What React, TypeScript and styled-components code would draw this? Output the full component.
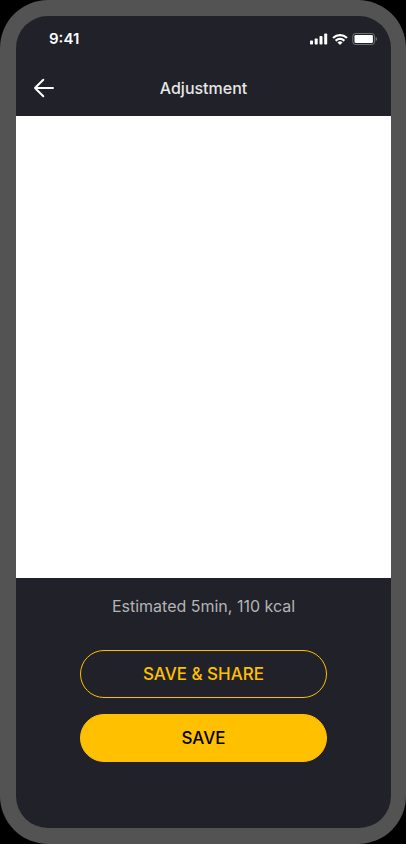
import React from "react";
import styled, { createGlobalStyle } from "styled-components";

const GlobalStyle = createGlobalStyle`
  *, *::before, *::after { box-sizing: border-box; }
  html, body, #root { height: 100%; }
  body { margin: 0; background: #000; font-family: Inter, "Liberation Sans", sans-serif; }
`;

const Device = styled.div`
  display: flex;
  min-height: 100%;
  padding: 16px 15px 16px 16px;
  border-radius: 48px;
  background: #535353;
`;

const Screen = styled.main`
  display: flex;
  flex: 1;
  flex-direction: column;
  overflow: hidden;
  border-radius: 32px;
  background: #212129;
`;

const StatusBar = styled.div`
  display: flex;
  align-items: center;
  justify-content: space-between;
  height: 44px;
  padding: 2px 14px 0 33px;
`;

const Clock = styled.time`
  color: #fff;
  font-size: 15px;
  font-weight: 600;
  line-height: 20px;
`;

const StatusIcons = styled.div`
  display: flex;
  align-items: center;
  gap: 4px;
`;

const Header = styled.header`
  display: grid;
  grid-template-columns: 56px 1fr 56px;
  align-items: center;
  height: 56px;
`;

const BackButton = styled.button`
  display: flex;
  align-items: center;
  width: 56px;
  height: 56px;
  padding: 0 0 0 16px;
  border: 0;
  background: none;
  color: #fff;
  cursor: pointer;
`;

const Title = styled.h1`
  margin: 0;
  color: #e6e6e6;
  font-size: 16px;
  font-weight: 500;
  line-height: 24px;
  text-align: center;
`;

const Preview = styled.section`
  flex: 1;
  background: #fff;
`;

const Footer = styled.footer`
  display: flex;
  flex-direction: column;
  align-items: center;
  padding: 16px 64px 66px;
`;

const Estimate = styled.p`
  margin: 0 0 32px;
  color: #b4b4b6;
  font-size: 16px;
  font-weight: 400;
  line-height: 24px;
  white-space: nowrap;
`;

const Actions = styled.div`
  display: flex;
  flex-direction: column;
  gap: 16px;
  width: 100%;
`;

const ActionButton = styled.button<{ $filled?: boolean }>`
  height: 48px;
  padding: 0;
  border: 1px solid #ffc000;
  border-radius: 24px;
  background: ${(p) => (p.$filled ? "#ffc000" : "transparent")};
  color: ${(p) => (p.$filled ? "#000" : "#ffc000")};
  font-family: inherit;
  font-size: 17px;
  font-weight: 500;
  line-height: 24px;
  cursor: pointer;
`;

const SignalIcon = () => (
  <svg width="18" height="12" viewBox="0 0 18 12" fill="#fff" aria-hidden="true">
    <rect x="0" y="7.5" width="3" height="4" rx="0.8" />
    <rect x="4.7" y="5.5" width="3" height="6" rx="0.8" />
    <rect x="9.5" y="3" width="3" height="8.5" rx="0.8" />
    <rect x="14.2" y="0.5" width="3" height="11" rx="0.8" />
  </svg>
);

const WifiIcon = () => (
  <svg width="16" height="11" viewBox="0 0 16 11" fill="#fff" aria-hidden="true">
    <path d="M8 2.3c2.2 0 4.3.8 5.9 2.3.1.1.3.1.4 0l1.2-1.2c.1-.1.1-.3 0-.4a10.9 10.9 0 0 0-15 0c-.1.1-.1.3 0 .4l1.2 1.2c.1.1.3.1.4 0A8.6 8.6 0 0 1 8 2.3z" />
    <path d="M8 6.1c1.2 0 2.4.5 3.3 1.3.1.1.3.1.4 0l1.2-1.2c.1-.1.1-.3 0-.4a7.1 7.1 0 0 0-9.8 0c-.1.1-.1.3 0 .4l1.2 1.2c.1.1.3.1.4 0C5.6 6.6 6.8 6.1 8 6.1z" />
    <path d="M10.3 8.7c.1-.1.1-.3 0-.4a3.6 3.6 0 0 0-4.6 0c-.1.1-.1.3 0 .4l2.1 2.1c.1.1.3.1.4 0z" />
  </svg>
);

const BatteryIcon = () => (
  <svg width="25" height="12" viewBox="0 0 25 12" aria-hidden="true">
    <rect x="0.8" y="0.5" width="21.7" height="11" rx="2.7" fill="none" stroke="#fff" strokeOpacity="0.35" />
    <path d="M23.7 4v4c.7-.3 1.2-1.1 1.2-2s-.5-1.7-1.2-2z" fill="#fff" fillOpacity="0.4" />
    <rect x="2.5" y="2" width="18.4" height="8" rx="1.3" fill="#fff" />
  </svg>
);

const BackIcon = () => (
  <svg
    width="24"
    height="24"
    viewBox="0 0 24 24"
    fill="none"
    stroke="currentColor"
    strokeWidth="2"
    strokeLinecap="round"
    strokeLinejoin="round"
    aria-hidden="true"
  >
    <path d="M21 12H3M11.3 3.7 3 12l8.3 8.3" />
  </svg>
);

export default function App() {
  return (
    <>
      <GlobalStyle />
      <Device>
        <Screen>
          <StatusBar>
            <Clock>9:41</Clock>
            <StatusIcons>
              <SignalIcon />
              <WifiIcon />
              <BatteryIcon />
            </StatusIcons>
          </StatusBar>
          <Header>
            <BackButton type="button" aria-label="Back">
              <BackIcon />
            </BackButton>
            <Title>Adjustment</Title>
          </Header>
          <Preview aria-label="Preview" />
          <Footer>
            <Estimate>Estimated 5min, 110 kcal</Estimate>
            <Actions>
              <ActionButton type="button">SAVE &amp; SHARE</ActionButton>
              <ActionButton type="button" $filled>
                SAVE
              </ActionButton>
            </Actions>
          </Footer>
        </Screen>
      </Device>
    </>
  );
}
